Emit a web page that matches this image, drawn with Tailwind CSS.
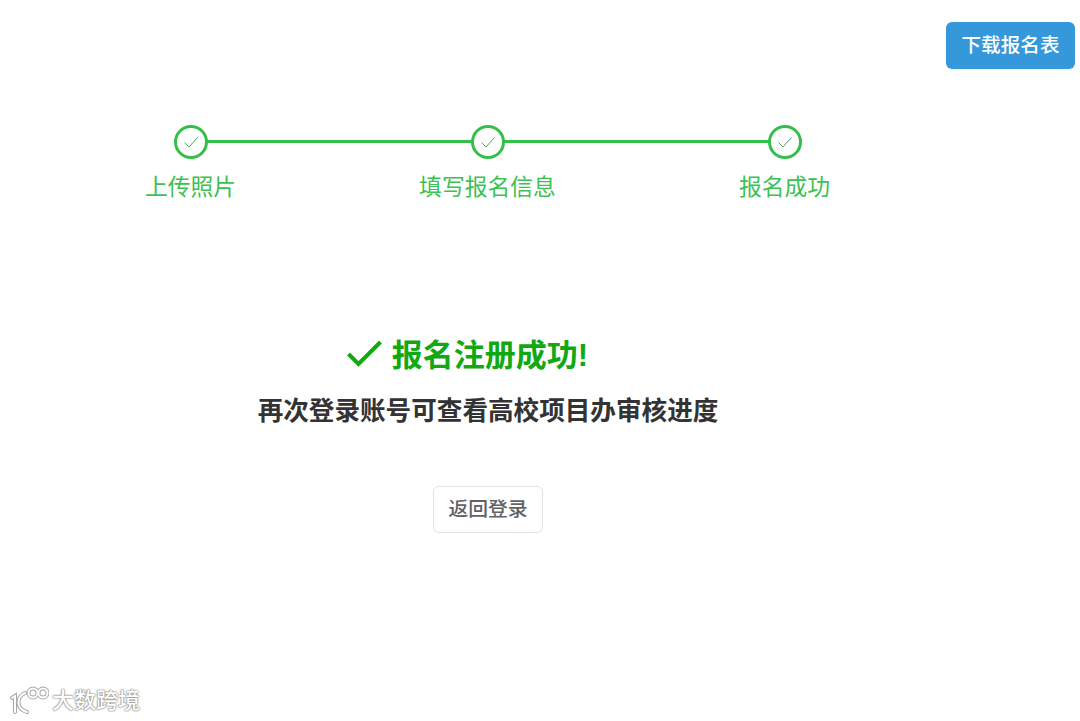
<!DOCTYPE html>
<html lang="zh-CN">
<head>
    <meta charset="UTF-8">
    <meta name="viewport" content="width=device-width, initial-scale=1.0">
    <title>报名注册成功</title>
    <script src="https://cdn.jsdelivr.net/npm/@tailwindcss/browser@4"></script>
</head>
<body class="relative h-[721px] w-[1080px] overflow-hidden bg-white font-['Liberation_Sans','Noto_Sans_CJK_SC',sans-serif]">
    <!-- top action -->
    <div class="flex justify-end pt-[22px] pr-[5px]">
        <button class="h-[47px] w-[129px] rounded-[6px] bg-[#3498db] text-[19.6px] font-medium text-white">下载报名表</button>
    </div>

    <!-- steps -->
    <div class="mt-[56px] ml-[42px] grid w-[891px] grid-cols-3">
        <div class="relative flex flex-col items-center">
            <div class="absolute top-[15px] left-1/2 h-[3px] w-full bg-[#34bf49]"></div>
            <div class="relative flex h-[34px] w-[34px] items-center justify-center rounded-full border-[3px] border-[#34bf49] bg-white">
                <svg class="h-[18px] w-[18px]" viewBox="0 0 18 18" fill="none" stroke="#55a865" stroke-width="1"><path d="M2.5 9.5 L7 14 L15.5 4.5"/></svg>
            </div>
            <div class="mt-[11px] text-[22.8px] leading-[34px] text-[#3cc152]">上传照片</div>
        </div>
        <div class="relative flex flex-col items-center">
            <div class="absolute top-[15px] left-1/2 h-[3px] w-full bg-[#34bf49]"></div>
            <div class="relative flex h-[34px] w-[34px] items-center justify-center rounded-full border-[3px] border-[#34bf49] bg-white">
                <svg class="h-[18px] w-[18px]" viewBox="0 0 18 18" fill="none" stroke="#55a865" stroke-width="1"><path d="M2.5 9.5 L7 14 L15.5 4.5"/></svg>
            </div>
            <div class="mt-[11px] text-[22.8px] leading-[34px] text-[#3cc152]">填写报名信息</div>
        </div>
        <div class="relative flex flex-col items-center">
            <div class="relative flex h-[34px] w-[34px] items-center justify-center rounded-full border-[3px] border-[#34bf49] bg-white">
                <svg class="h-[18px] w-[18px]" viewBox="0 0 18 18" fill="none" stroke="#55a865" stroke-width="1"><path d="M2.5 9.5 L7 14 L15.5 4.5"/></svg>
            </div>
            <div class="mt-[11px] text-[22.8px] leading-[34px] text-[#3cc152]">报名成功</div>
        </div>
    </div>

    <!-- result -->
    <div class="mt-[130px] flex w-[976px] flex-col items-center">
        <div class="flex h-[44px] items-center gap-[10px] pr-[41px]">
            <svg class="mb-[4px] h-[28px] w-[35px]" viewBox="0 0 35 28" fill="none" stroke="#12a812" stroke-width="4"><path d="M1.5 14 L11.5 24 L33.5 2"/></svg>
            <span class="text-[31px] font-bold leading-[44px] text-[#12a812]">报名注册成功!</span>
        </div>
        <div class="mt-[14px] text-[25.6px] font-bold leading-[38px] text-[#333333]">再次登录账号可查看高校项目办审核进度</div>
        <button class="mt-[56px] h-[47px] w-[110px] rounded-[6px] border border-[#dfe1e6] bg-white text-[19.8px] font-medium text-[#606266]">返回登录</button>
    </div>

    <!-- watermark -->
    <div class="absolute bottom-[5px] left-[9px] flex items-center gap-[3px] text-white">
        <svg class="h-[30px] w-[40px]" viewBox="0 0 40 30">
            <g fill="none" stroke="#a8a8a8" stroke-width="4" stroke-linecap="round"><path d="M3 12 L6 10 L6 26 M16 7 C7 11 7 23 18 26"/><circle cx="24" cy="7" r="4.5"/><circle cx="34" cy="7" r="4.5"/></g>
            <g fill="none" stroke="#ffffff" stroke-width="2" stroke-linecap="round"><path d="M3 12 L6 10 L6 26 M16 7 C7 11 7 23 18 26"/><circle cx="24" cy="7" r="4.5"/><circle cx="34" cy="7" r="4.5"/></g>
        </svg>
        <span class="text-[22px] font-medium leading-[30px] [text-shadow:0_0_2px_#666,0_0_1px_#666]">大数跨境</span>
    </div>
</body>
</html>
